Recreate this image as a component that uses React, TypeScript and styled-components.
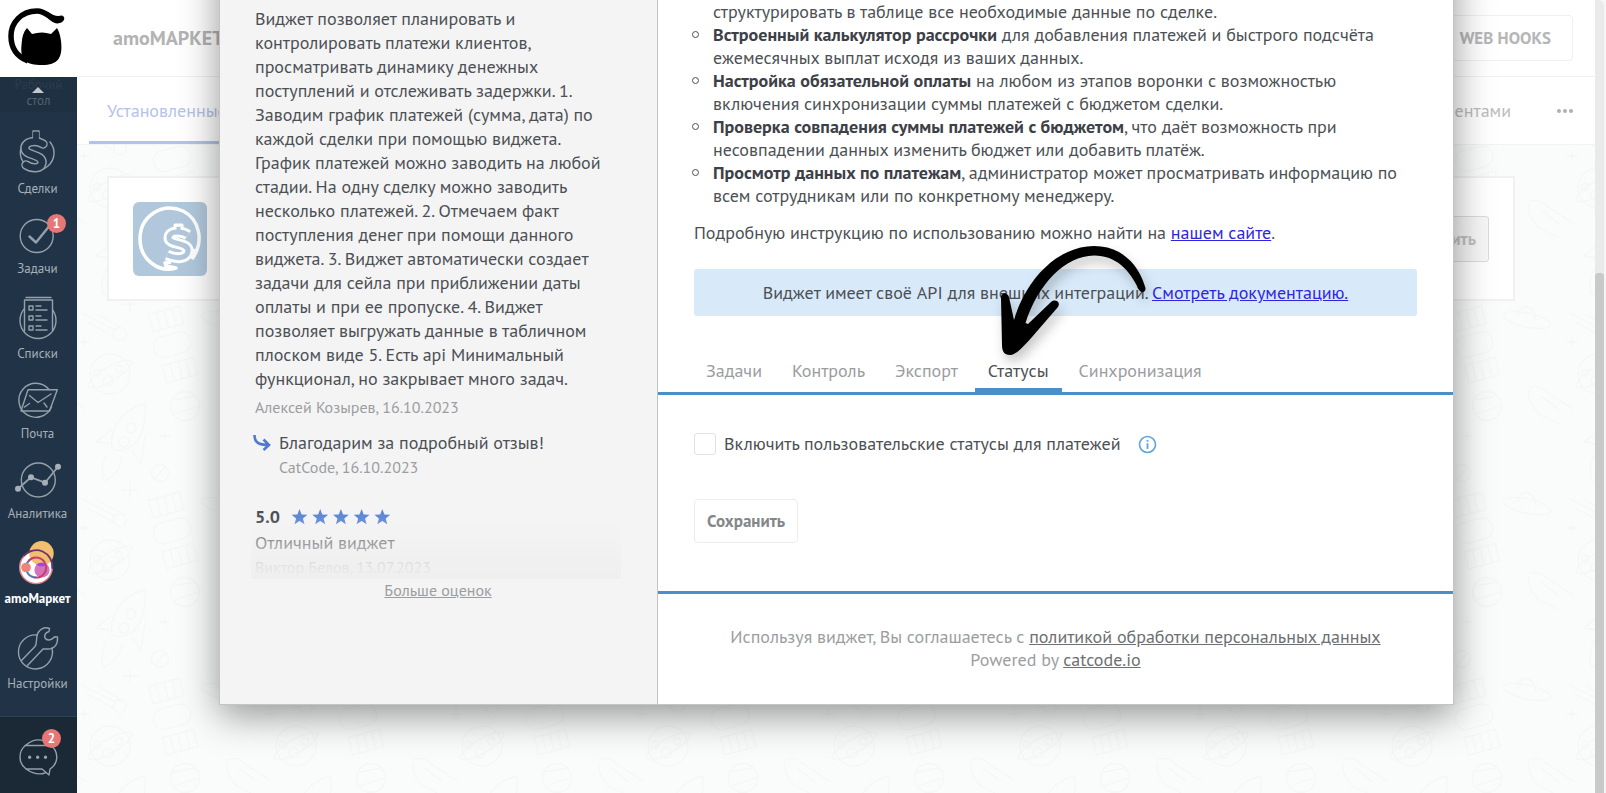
import React from "react";
import styled, { createGlobalStyle } from "styled-components";

const colors = {
  nav: "#213447",
  navDark: "#1b2937",
  navText: "#a7b0b8",
  accent: "#4b8fca",
  star: "#5f88d6",
  text: "#4c5054",
  muted: "#9b9ea1",
  badge: "#e57876",
};

const GlobalStyle = createGlobalStyle`
  *, *::before, *::after { box-sizing: border-box; }
  body {
    margin: 0;
    font-family: "PT Sans", Lato, "Liberation Sans", sans-serif;
    font-size: 18px;
    line-height: 24px;
    color: ${colors.text};
    background: #fafbfb;
  }
  button, input { font-family: inherit; }
  p, ul, h1 { margin: 0; padding: 0; }
`;

const Page = styled.div`
  position: relative;
  display: grid;
  grid-template-columns: 77px minmax(0, 1fr) 11px;
  height: 100vh;
  overflow: hidden;
`;

/* ---------- sidebar ---------- */

const Sidebar = styled.aside`
  display: flex;
  flex-direction: column;
  min-height: 0;
  background: ${colors.nav};
`;

const LogoLink = styled.a`
  flex: none;
  height: 77px;
  background: #fff;
`;

const NavList = styled.nav`
  flex: 1;
  min-height: 0;
  display: flex;
  flex-direction: column;
  gap: 18px;
  overflow: hidden;
`;

const ScrollHint = styled.div`
  position: relative;
  flex: none;
  height: 35px;
  overflow: hidden;
  font-size: 13px;
  line-height: 16px;
  text-align: center;
  background: #1e3041;
  svg {
    position: absolute;
    left: 32px;
    top: 9px;
  }
`;

const GhostLine = styled.span<{ $faint?: boolean }>`
  display: block;
  color: ${(p) => (p.$faint ? "#2a3d4e" : "#53636f")};
`;

const NavItem = styled.a<{ $active?: boolean }>`
  position: relative;
  flex: none;
  display: flex;
  flex-direction: column;
  align-items: center;
  gap: 9px;
  padding-right: 2px;
  font-size: 13px;
  line-height: 16px;
  text-decoration: none;
  font-weight: ${(p) => (p.$active ? 700 : 400)};
  color: ${(p) => (p.$active ? "#fff" : colors.navText)};
`;

const NavFooter = styled.div`
  flex: none;
  height: 77px;
  padding-top: 21px;
  border-top: 1px solid #2c4551;
  background: ${colors.navDark};
`;

const Badge = styled.span<{ $raised?: boolean }>`
  position: absolute;
  left: ${(p) => (p.$raised ? 42 : 47)}px;
  top: ${(p) => (p.$raised ? -9 : -1)}px;
  width: 19px;
  height: 19px;
  border-radius: 50%;
  background: ${colors.badge};
  color: #fff;
  font-size: 13px;
  font-weight: 700;
  line-height: 19px;
  text-align: center;
`;

const NavSvg = styled.svg`
  display: block;
  width: 44px;
  overflow: visible;
  fill: none;
  stroke: #94a0aa;
  stroke-width: 1.4;
  stroke-linecap: round;
  stroke-linejoin: round;
`;

/* ---------- page behind the dialog ---------- */

const Main = styled.main`
  position: relative;
  min-width: 0;
  display: flex;
  flex-direction: column;
  overflow: hidden;
`;

const Backdrop = styled.svg`
  position: absolute;
  inset: 0;
  width: 100%;
  height: 100%;
  z-index: -1;
`;

const TopBar = styled.header`
  display: flex;
  align-items: center;
  justify-content: space-between;
  height: 77px;
  padding: 0 22px 0 36px;
  border-bottom: 1px solid #f1f1f1;
  background: #fff;
`;

const PageTitle = styled.h1`
  font-size: 20px;
  line-height: 24px;
  font-weight: 700;
  color: #b3b3b3;
`;

const HooksButton = styled.button`
  height: 46px;
  padding: 0 21px;
  border: 1px solid #f0f0f0;
  border-radius: 4px;
  background: #fff;
  color: #b5b6b7;
  font-size: 17px;
  font-weight: 700;
`;

const SubNav = styled.nav`
  display: flex;
  align-items: stretch;
  height: 68px;
  padding: 0 22px 0 12px;
  border-bottom: 1px solid #f3f3f3;
  background: #fff;
`;

const SubTab = styled.a<{ $active?: boolean }>`
  padding: 22px 18px 0;
  text-decoration: none;
  color: ${(p) => (p.$active ? "#b5c3e6" : "#bcbcbc")};
  border-bottom: 3px solid ${(p) => (p.$active ? "#b1c3e8" : "transparent")};
  &:nth-child(2) { margin-left: auto; }
`;

const MoreButton = styled.button`
  margin-left: 28px;
  padding: 0;
  border: 0;
  background: none;
  svg { display: block; }
`;

const WidgetCard = styled.section`
  display: flex;
  align-items: center;
  justify-content: space-between;
  margin: 31px 80px 0 30px;
  height: 125px;
  padding: 0 24px;
  border: 2px solid #f1f1f1;
  background: #fff;
`;

const CardButton = styled.button`
  height: 46px;
  padding: 0 12px;
  border: 1px solid #dcdcdc;
  border-radius: 3px;
  background: #f7f7f7;
  color: #c2c2c2;
  font-size: 17px;
  font-weight: 700;
`;

const ScrollTrack = styled.div`
  padding-right: 2px;
  background: #f5f5f5;
`;

const ScrollThumb = styled.div`
  height: 100%;
  padding-top: 273px;
  border-radius: 0 6px 0 0;
  background: #eaeaea;
  &::after {
    content: "";
    display: block;
    height: 100%;
    border-radius: 3px 3px 0 0;
    background: #c9c9c9;
  }
`;

/* ---------- dialog ---------- */

const Overlay = styled.div`
  position: absolute;
  inset: 0 11px 0 77px;
  overflow: hidden;
  padding: 0 141px 0 142px;
`;

const Dialog = styled.div`
  position: relative;
  display: grid;
  grid-template-columns: 438px minmax(0, 1fr);
  margin-top: -49px;
  border: 1px solid #c4c4c4;
  background: #fff;
  box-shadow: 0 10px 36px rgba(0, 0, 0, 0.42);
`;

const Reviews = styled.aside`
  display: flex;
  flex-direction: column;
  padding: 55px 36px 0 35px;
  border-right: 1px solid #c4c4c4;
  background: #f4f4f4;
`;

const ReviewText = styled.p`
  margin-bottom: 4px;
  white-space: nowrap;
`;

const Author = styled.p`
  font-size: 16px;
  line-height: 24px;
  color: ${colors.muted};
`;

const Reply = styled.div`
  display: grid;
  grid-template-columns: 24px 1fr;
  margin: 12px 0 26px;
  p:nth-of-type(2) { grid-column: 2; }
  svg {
    display: block;
    margin: 4px 0 0 -2px;
  }
`;

const FadedReview = styled.div`
  position: relative;
  margin-left: -4px;
  padding-left: 4px;
  &::after {
    content: "";
    position: absolute;
    inset: 0;
    background: linear-gradient(
      180deg,
      rgba(240, 240, 240, 0) 16%,
      rgba(240, 240, 240, 0.45) 50%,
      rgba(239, 239, 239, 0.85) 84%,
      #efefef 100%
    );
  }
`;

const Rating = styled.div`
  display: flex;
  align-items: center;
  gap: 11px;
  padding-bottom: 2px;
  font-weight: 700;
  color: ${colors.text};
`;

const MoreReviews = styled.button`
  align-self: center;
  padding: 0;
  border: 0;
  background: none;
  font-size: 16px;
  line-height: 22px;
  color: ${colors.muted};
  text-decoration: underline;
`;

const Settings = styled.section`
  display: flex;
  flex-direction: column;
  padding-top: 48px;
`;

const FeatureList = styled.ul`
  padding: 0 36px 0 55px;
  list-style: none;
  line-height: 23px;
  li { position: relative; }
`;

const Feature = styled.li`
  &::before {
    content: "";
    position: absolute;
    left: -21px;
    top: 8px;
    width: 7px;
    height: 7px;
    border: 1px solid ${colors.text};
    border-radius: 50%;
  }
`;

const Strong = styled.strong`
  color: #3d4147;
`;

const Manual = styled.p`
  margin: 14px 36px 0;
  line-height: 23px;
`;

const DocLink = styled.a`
  color: #2f25e0;
`;

const ApiNotice = styled.p`
  margin: 25px 36px 0;
  padding: 12px;
  border-radius: 3px;
  background: #d8eafa;
  line-height: 23px;
  text-align: center;
`;

const Tabs = styled.div`
  display: flex;
  gap: 4px;
  margin-top: 43px;
  padding: 0 35px;
  border-bottom: 3px solid ${colors.accent};
`;

const Tab = styled.button<{ $active?: boolean }>`
  height: 33px;
  padding: 0 13px 6px;
  border: 0;
  border-bottom: 4px solid ${(p) => (p.$active ? colors.accent : "transparent")};
  background: none;
  font-size: 18px;
  line-height: 23px;
  color: ${(p) => (p.$active ? colors.text : "#9a9da0")};
`;

const TabPanel = styled.div`
  display: flex;
  flex-direction: column;
  align-items: flex-start;
  gap: 43px;
  padding: 37px 36px 48px;
  border-bottom: 3px solid ${colors.accent};
`;

const Option = styled.label`
  display: flex;
  align-items: center;
  height: 24px;
  gap: 8px;
  svg { margin-left: 10px; }
`;

const Checkbox = styled.input`
  appearance: none;
  width: 22px;
  height: 22px;
  margin: 0;
  border: 1px solid #e2e2e2;
  border-radius: 3px;
  background: #fff;
`;

const SaveButton = styled.button`
  height: 44px;
  padding: 0 12px;
  border: 1px solid #ececec;
  border-radius: 4px;
  background: #fff;
  color: #84878a;
  font-size: 17px;
  font-weight: 700;
`;

const Legal = styled.footer`
  padding: 31px 36px 33px;
  line-height: 23px;
  text-align: center;
  color: ${colors.muted};
`;

const LegalLink = styled.a`
  color: #6d6f72;
`;

const Pointer = styled.svg`
  position: absolute;
  left: 770px;
  top: 284px;
  overflow: visible;
  filter: drop-shadow(3px 7px 6px rgba(0, 0, 0, 0.22));
  pointer-events: none;
`;

/* ---------- drawings ---------- */

const CatLogo = () => (
  <svg width="77" height="77" viewBox="0 0 77 77" aria-label="CatCode">
    <path d="M57 19C49 19 47 11 37 11C21 11 11 23 11 36C11 49 18 57 28 61" fill="none" stroke="#000" strokeWidth="5.500" />
    <path d="M48 12C54 17 59 16 62 15.500C65 16.500 65 20 62 22C56 26 50 21 46 16Z" />
    <path d="M27 28L32 34Q42 31 51 34L57 28Q60 33 61 41C63 58 58 65 42 65C26 65 20 60 21.500 45Q22 33 27 28Z" />
  </svg>
);

const Dollar = "M27 14C19 9 8 12 9 19C10 26 27 24 26 33C25 39 16 39 10 35";

const DealsIcon = () => (
  <NavSvg height="42" viewBox="0 0 44 42">
    <path d="M10 10.500A17 17 0 1 0 34 12" />
    <path d="M17 10V1H23V10" />
    <path d={Dollar} strokeWidth="9.500" />
    <path d={Dollar} stroke={colors.nav} strokeWidth="6.600" />
    <path d="M18.300 3V12M21.700 3V12M20 3V12" stroke={colors.nav} strokeWidth="2.400" />
  </NavSvg>
);

const TasksIcon = () => (
  <NavSvg height="37" viewBox="0 0 44 37">
    <circle cx="20.700" cy="21" r="16.500" />
    <path d="M13.500 21.500L20 27.500L32.500 12" strokeWidth="2.400" />
  </NavSvg>
);

const ListsIcon = () => (
  <NavSvg height="42" viewBox="0 0 44 42">
    <circle cx="22" cy="25.500" r="18" />
    <path d="M8.500 5H36.500V36Q22 43 8.500 36Z" fill={colors.nav} stroke="none" />
    <path d="M8.500 36V5H36.500V36M10 2.500H35" />
    {[13, 23, 33].map((y) => (
      <path key={y} d={`M13 ${y - 2}h4v4h-4zM20 ${y - 2}h5M20 ${y + 2}h11`} />
    ))}
  </NavSvg>
);

const MailIcon = () => (
  <NavSvg height="37" viewBox="0 0 44 37">
    <path d="M33 9.500A17 17 0 1 0 35.500 27" />
    <path d="M12 9.700H41.300L33.500 31H5Z" />
    <path d="M13.500 15.500L22 22.500L35 14M8.500 27L13.500 23.500M28 23L31 27" />
  </NavSvg>
);

const AnalyticsIcon = () => (
  <NavSvg height="37" viewBox="0 0 44 37">
    <circle cx="22.300" cy="20" r="17" />
    <path d="M2 28.700L15 17.300L29 22.700L42 6.700" strokeWidth="1.800" />
    {[[2, 28.7], [15, 17.3], [29, 22.7], [42, 6.7]].map(([x, y]) => (
      <circle key={x} cx={x} cy={y} r="3" fill="#a7b0b8" stroke="none" />
    ))}
  </NavSvg>
);

const MarketIcon = () => (
  <NavSvg height="42" viewBox="0 0 44 42">
    <circle cx="20" cy="27.300" r="16.300" fill="#fff" stroke="#dd8087" />
    <circle cx="25.500" cy="13.300" r="12.200" fill="#f0c070" stroke="none" />
    <path d="M8 15.500A16.300 16.300 0 0 1 36.300 28" stroke="#70306f" strokeWidth="1.800" />
    <circle cx="26" cy="30" r="7.600" fill="#d673bd" stroke="none" />
    <path d="M19 37.500A10 10 0 0 1 13 20.500" stroke="#4c78c8" strokeWidth="2" />
    <path d="M13 20.500A10 10 0 1 1 19 37.500" stroke="#c3406a" strokeWidth="2" />
    <path d="M20 24.500Q26 21 30 25Q26 28 20 24.500Z" fill="#a348d6" stroke="none" />
    <circle cx="10" cy="27.500" r="4.800" fill="#ee8378" stroke="none" />
  </NavSvg>
);

const SettingsIcon = () => (
  <NavSvg height="42" viewBox="0 0 44 42">
    <path d="M21 10A17 17 0 1 0 36 23" />
    <path d="M5.500 35.500L19 21.500C21 19 20 16 21 11C22 5 28 1 33.500 3.500L33 6.500C29 8 28 10 29 13C31 16 34 15 36 14C38 12 39 11 41.500 12C42 19 39 24 32 24L27 24L11.500 40.500" />
  </NavSvg>
);

const ChatIcon = () => (
  <NavSvg height="37" viewBox="0 0 44 37">
    <path d="M10 7Q22 -3 34 6.500C44 14 42 26 34 31L33 37L26 31H10M9 7.500H37M10 31Q20 38 29 35M10 31C2 25 2 13 10 7" />
    {[13.7, 21.7, 29.5].map((x) => (
      <circle key={x} cx={x} cy="19.300" r="1" fill="#a7b0b8" />
    ))}
  </NavSvg>
);

const WidgetLogo = () => {
  const s = "M55 33C49 29 36 28 36 36C36 43 56 40 55 49C54 57 43 57 34 53";
  return (
    <svg width="74" height="74" viewBox="0 0 74 74" aria-label="Виджет">
      <rect width="74" height="74" rx="6" fill="#b1c8dc" />
      <g fill="none" stroke="#fff" strokeWidth="3.500" strokeLinejoin="round">
        <path d="M59 57C72 39 66 17 50 9C29 0 7 14 7 37C7 58 26 71 43 66L33 64L32 61L38 60" />
        <path d="M59 57L62 47" />
        <path d="M42 30V23H49V30" strokeWidth="3" />
        <path d={s} strokeWidth="11" />
        <path d={s} stroke="#b1c8dc" strokeWidth="5" />
        <path d="M45.500 25V31" stroke="#b1c8dc" strokeWidth="4" />
      </g>
    </svg>
  );
};

const StarRow = () => (
  <svg width="100" height="16" viewBox="0 0 100 16" fill={colors.star} aria-label="5 из 5">
    {[0, 1, 2, 3, 4].map((i) => (
      <path
        key={i}
        transform={`translate(${i * 20.7} 0)`}
        d="M8.500 0L10.600 5.500L16.400 5.800L11.900 9.500L13.500 15.200L8.500 12L3.500 15.200L5.100 9.500L0.600 5.800L6.400 5.500Z"
      />
    ))}
  </svg>
);

const ReplyArrow = () => (
  <svg width="18" height="16" viewBox="0 0 18 16" fill="none" stroke="#4f79d3" strokeWidth="2.600">
    <path d="M1.500 0C1.500 7 5 10 16 10M10.500 4.500L16 10L10.500 15" />
  </svg>
);

const InfoIcon = () => (
  <svg width="19" height="19" viewBox="0 0 19 19" fill="none" stroke="#5ea5dc" strokeWidth="1.600">
    <circle cx="9.500" cy="9.500" r="8" />
    <path d="M9.500 8.200V14M9.500 5V6.800" strokeWidth="1.800" />
  </svg>
);

const CurvedArrow = () => (
  <Pointer width="165" height="135" viewBox="0 0 165 135" aria-hidden="true">
    <path d="M149 54C140 34 126 19.500 104 19.500C75 20 48 48 35.500 87L38 88L61 66C66 62 71 67 68 71L42 101C33 111 26 119 20 119C14 119 12 115 12 109L11 62C11 56 17 56 19 61L24 84C36 43 68 10 104 10C132 10 149 29 155.500 52C156 57 151 57 149 54Z" />
  </Pointer>
);

const SpacePattern = () => (
  <Backdrop aria-hidden="true">
    <defs>
      <g id="doodles" fill="none" stroke="#f5f7f7" strokeWidth="1.300">
        <path d="M53 42V58M45 50H61M88 177V187M83 182H93M7 83V93M2 88H12" />
        <circle cx="33" cy="120" r="20" />
        <ellipse cx="33" cy="120" rx="25" ry="7" transform="rotate(-30 33 120)" />
        <circle cx="20" cy="119" r="3.500" />
        <circle cx="42" cy="115" r="3.500" />
        <circle cx="31" cy="127" r="5" />
        <path d="M68 150C45 155 32 175 35 195C50 200 70 190 68 150ZM35 175L19 188L33 190M68 182L64 210L55 197M30 200C24 210 24 222 27 227C36 224 44 214 45 204" />
        <circle cx="54" cy="174" r="5" />
        <circle cx="47" cy="188" r="5" />
        <g transform="rotate(-15 96 90)">
          <path d="M80 55H112V73H80ZM88 55V73M96 55V73M104 55V73M80 108H112V126H80ZM88 108V126M96 108V126M104 108V126" />
          <rect x="76" y="80" width="38" height="21" rx="10" />
        </g>
        <circle cx="108" cy="152" r="14.500" />
        <path d="M96 146L118 142M97 160L121 152" />
        <circle cx="83" cy="219" r="8.500" />
        <path d="M78 225L88 213" />
        <circle cx="43" cy="80" r="6.500" />
        <path d="M5 59L38 76M10 68L36 82M20 60L42 72" />
        <path d="M150 134C158 130 164 134 168 138L194 155M150 136C148 146 154 154 160 160L180 170M162 142L180 156" />
        <ellipse cx="148" cy="66" rx="24" ry="7" transform="rotate(12 148 66)" />
        <path d="M139 62C140 48 156 50 157 66" />
      </g>
      <pattern id="space" width="186" height="186" patternUnits="userSpaceOnUse" y="68">
        <use href="#doodles" />
        <use href="#doodles" y="-186" />
        <use href="#doodles" x="-186" />
      </pattern>
    </defs>
    <rect width="100%" height="100%" fill="#fafbfb" />
    <rect width="100%" height="100%" fill="url(#space)" />
  </Backdrop>
);

/* ---------- data ---------- */

const navItems = [
  { label: "Сделки", Icon: DealsIcon },
  { label: "Задачи", Icon: TasksIcon, badge: 1 },
  { label: "Списки", Icon: ListsIcon },
  { label: "Почта", Icon: MailIcon },
  { label: "Аналитика", Icon: AnalyticsIcon },
  { label: "amoМаркет", Icon: MarketIcon, active: true },
  { label: "Настройки", Icon: SettingsIcon },
];

const reviewLines = [
  "Виджет позволяет планировать и",
  "контролировать платежи клиентов,",
  "просматривать динамику денежных",
  "поступлений и отслеживать задержки. 1.",
  "Заводим график платежей (сумма, дата) по",
  "каждой сделки при помощью виджета.",
  "График платежей можно заводить на любой",
  "стадии. На одну сделку можно заводить",
  "несколько платежей. 2. Отмечаем факт",
  "поступления денег при помощи данного",
  "виджета. 3. Виджет автоматически создает",
  "задачи для сейла при приближении даты",
  "оплаты и при ее пропуске. 4. Виджет",
  "позволяет выгружать данные в табличном",
  "плоском виде 5. Есть api Минимальный",
  "функционал, но закрывает много задач.",
];

const features = [
  ["Встроенный калькулятор рассрочки", " для добавления платежей и быстрого подсчёта", "ежемесячных выплат исходя из ваших данных."],
  ["Настройка обязательной оплаты", " на любом из этапов воронки с возможностью", "включения синхронизации суммы платежей с бюджетом сделки."],
  ["Проверка совпадения суммы платежей с бюджетом", ", что даёт возможность при", "несовпадении данных изменить бюджет или добавить платёж."],
  ["Просмотр данных по платежам", ", администратор может просматривать информацию по", "всем сотрудникам или по конкретному менеджеру."],
];

const tabs = ["Задачи", "Контроль", "Экспорт", "Статусы", "Синхронизация"];

export default function App() {
  return (
    <>
      <GlobalStyle />
      <Page>
        <Sidebar>
          <LogoLink href="#home">
            <CatLogo />
          </LogoLink>
          <NavList>
            <ScrollHint>
              <GhostLine $faint>Рабочий</GhostLine>
              <GhostLine>стол</GhostLine>
              <svg width="12" height="7" viewBox="0 0 12 7" fill="#c3c8cc">
                <path d="M0 7L6 1L12 7Z" />
              </svg>
            </ScrollHint>
            {navItems.map(({ label, Icon, badge, active }) => (
              <NavItem key={label} href="#nav" $active={active}>
                <Icon />
                {badge && <Badge>{badge}</Badge>}
                {label}
              </NavItem>
            ))}
          </NavList>
          <NavFooter>
            <NavItem href="#chat" aria-label="Чаты">
              <ChatIcon />
              <Badge $raised>2</Badge>
            </NavItem>
          </NavFooter>
        </Sidebar>

        <Main>
          <SpacePattern />
          <TopBar>
            <PageTitle>amoМАРКЕТ</PageTitle>
            <HooksButton>WEB HOOKS</HooksButton>
          </TopBar>
          <SubNav>
            <SubTab href="#installed" $active>Установленные</SubTab>
            <SubTab href="#clients">клиентами</SubTab>
            <MoreButton aria-label="Ещё">
              <svg width="16" height="4" viewBox="0 0 16 4" fill="#b0b0b0">
                <circle cx="2" cy="2" r="2" />
                <circle cx="8" cy="2" r="2" />
                <circle cx="14" cy="2" r="2" />
              </svg>
            </MoreButton>
          </SubNav>
          <WidgetCard>
            <WidgetLogo />
            <CardButton>Настроить</CardButton>
          </WidgetCard>
        </Main>

        <ScrollTrack>
          <ScrollThumb />
        </ScrollTrack>

        <Overlay>
          <Dialog role="dialog">
            <Reviews>
              <ReviewText>
                {reviewLines.map((line) => (
                  <React.Fragment key={line}>
                    {line}
                    <br />
                  </React.Fragment>
                ))}
              </ReviewText>
              <Author>Алексей Козырев, 16.10.2023</Author>
              <Reply>
                <ReplyArrow />
                <p>Благодарим за подробный отзыв!</p>
                <Author>CatCode, 16.10.2023</Author>
              </Reply>
              <FadedReview>
                <Rating>
                  5.0
                  <StarRow />
                </Rating>
                <p>Отличный виджет</p>
                <Author>Виктор Белов, 13.07.2023</Author>
              </FadedReview>
              <MoreReviews>Больше оценок</MoreReviews>
            </Reviews>

            <Settings>
              <FeatureList>
                <li>структурировать в таблице все необходимые данные по сделке.</li>
                {features.map(([title, rest, second]) => (
                  <Feature key={title}>
                    <Strong>{title}</Strong>
                    {rest}
                    <br />
                    {second}
                  </Feature>
                ))}
              </FeatureList>
              <Manual>
                Подробную инструкцию по использованию можно найти на{" "}
                <DocLink href="#site">нашем сайте</DocLink>.
              </Manual>
              <ApiNotice>
                Виджет имеет своё API для внешних интеграций.{" "}
                <DocLink href="#docs">Смотреть документацию.</DocLink>
              </ApiNotice>
              <Tabs role="tablist">
                {tabs.map((tab) => (
                  <Tab key={tab} role="tab" aria-selected={tab === "Статусы"} $active={tab === "Статусы"}>
                    {tab}
                  </Tab>
                ))}
              </Tabs>
              <TabPanel role="tabpanel">
                <Option>
                  <Checkbox type="checkbox" />
                  Включить пользовательские статусы для платежей
                  <InfoIcon />
                </Option>
                <SaveButton>Сохранить</SaveButton>
              </TabPanel>
              <Legal>
                Используя виджет, Вы соглашаетесь с{" "}
                <LegalLink href="#policy">политикой обработки персональных данных</LegalLink>
                <br />
                Powered by <LegalLink href="#catcode">catcode.io</LegalLink>
              </Legal>
            </Settings>
            <CurvedArrow />
          </Dialog>
        </Overlay>
      </Page>
    </>
  );
}
